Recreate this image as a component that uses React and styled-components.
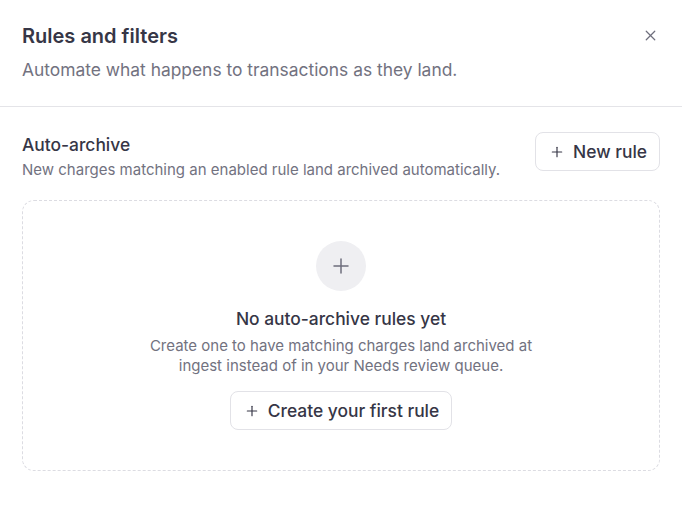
import React from 'react'
import styled, { createGlobalStyle } from 'styled-components'
import { X, Plus } from 'lucide-react'

const GlobalStyle = createGlobalStyle`
  html, body {
    margin: 0;
    padding: 0;
    background: #ffffff;
  }
  body {
    font-family: Inter, "Noto Sans", sans-serif;
    color: #363646;
    -webkit-font-smoothing: antialiased;
  }
`

const Panel = styled.div`
  width: 682px;
  min-height: 505px;
  background: #fff;
`

const Header = styled.header`
  position: relative;
  padding: 22px 22px 23px;
  border-bottom: 1px solid #e4e4e8;
`

const Title = styled.h2`
  margin: 0;
  font-size: 20px;
  line-height: 28px;
  font-weight: 580;
  color: #363646;
`

const Subtitle = styled.p`
  margin: 7px 0 0;
  font-size: 17.4px;
  line-height: 26px;
  color: #72727f;
`

const CloseButton = styled.button`
  position: absolute;
  top: 27px;
  right: 23px;
  width: 17px;
  height: 17px;
  padding: 0;
  border: 0;
  background: none;
  color: #6e6e7c;
  display: flex;
  align-items: center;
  justify-content: center;
  cursor: pointer;
`

const Section = styled.section`
  padding: 25px 22px 0;
`

const SectionHead = styled.div`
  display: flex;
  justify-content: space-between;
  align-items: flex-start;
`

const SectionTitle = styled.h3`
  margin: 1px 0 0;
  font-size: 17.4px;
  line-height: 24px;
  font-weight: 500;
  color: #363646;
`

const SectionText = styled.p`
  margin: 2px 0 0;
  font-size: 15px;
  line-height: 22px;
  color: #72727f;
`

const Button = styled.button`
  display: inline-flex;
  align-items: center;
  gap: 8px;
  height: 39px;
  padding: 0 12px 0 13px;
  border: 1px solid #e2e2e7;
  border-radius: 8px;
  background: #fff;
  font-family: inherit;
  font-size: 17.4px;
  font-weight: 480;
  color: #363646;
  cursor: pointer;
  flex-shrink: 0;
`

const EmptyBox = styled.div`
  margin-top: 19px;
  border: 1px dashed #dcdce2;
  border-radius: 12px;
  padding: 40px 24px 40px;
  display: flex;
  flex-direction: column;
  align-items: center;
  text-align: center;
`

const IconCircle = styled.div`
  width: 50px;
  height: 50px;
  border-radius: 50%;
  background: #efeff2;
  color: #6e6e7c;
  display: flex;
  align-items: center;
  justify-content: center;
`

const EmptyTitle = styled.h4`
  margin: 16px 0 0;
  font-size: 17.4px;
  line-height: 24px;
  font-weight: 480;
  color: #363646;
`

const EmptyText = styled.p`
  margin: 5px 0 0;
  max-width: 400px;
  font-size: 15px;
  line-height: 20px;
  color: #72727f;
`

const EmptyAction = styled.div`
  margin-top: 15px;
`

export default function App () {
  return (
    <Panel>
      <GlobalStyle />
      <Header>
        <Title>Rules and filters</Title>
        <Subtitle>Automate what happens to transactions as they land.</Subtitle>
        <CloseButton aria-label='Close'>
          <X size={17} strokeWidth={1.75} />
        </CloseButton>
      </Header>
      <Section>
        <SectionHead>
          <div>
            <SectionTitle>Auto-archive</SectionTitle>
            <SectionText>New charges matching an enabled rule land archived automatically.</SectionText>
          </div>
          <Button>
            <Plus size={16} strokeWidth={1.75} />
            New rule
          </Button>
        </SectionHead>
        <EmptyBox>
          <IconCircle>
            <Plus size={24} strokeWidth={1.5} />
          </IconCircle>
          <EmptyTitle>No auto-archive rules yet</EmptyTitle>
          <EmptyText>
            Create one to have matching charges land archived at ingest instead of in your Needs review queue.
          </EmptyText>
          <EmptyAction>
            <Button>
              <Plus size={16} strokeWidth={1.75} />
              Create your first rule
            </Button>
          </EmptyAction>
        </EmptyBox>
      </Section>
    </Panel>
  )
}
